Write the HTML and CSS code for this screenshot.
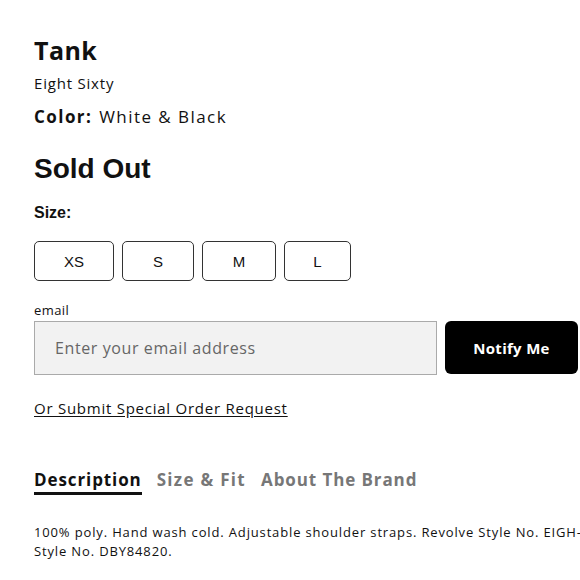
FILE: index.html
```html
<!DOCTYPE html>
<html lang="en">
<head>
<meta charset="utf-8">
<title>Tank - Eight Sixty</title>
<link rel="stylesheet" href="styles.css">
</head>
<body>
<main class="product">
  <h1 class="title">Tank</h1>
  <div class="brand">Eight Sixty</div>
  <div class="color"><span class="color-label">Color:</span> White &amp; Black</div>
  <div class="status">Sold Out</div>
  <div class="size-label">Size:</div>
  <div class="sizes">
    <button class="size size-xs">XS</button>
    <button class="size size-s">S</button>
    <button class="size size-m">M</button>
    <button class="size size-l">L</button>
  </div>
  <label class="email-label" for="email">email</label>
  <div class="notify">
    <input id="email" class="email-input" type="email" placeholder="Enter your email address">
    <button class="notify-btn">Notify Me</button>
  </div>
  <a class="special" href="#">Or Submit Special Order Request</a>
  <nav class="tabs">
    <span class="tab active">Description</span>
    <span class="tab">Size &amp; Fit</span>
    <span class="tab">About The Brand</span>
  </nav>
  <p class="desc">100% poly. Hand wash cold. Adjustable shoulder straps. Revolve Style No. EIGH-WS12 Manufacturer Style No. DBY84820.</p>
</main>
</body>
</html>
```
FILE: styles.css
```css
html, body {
  margin: 0;
  padding: 0;
  overflow: hidden;
  background: #fff;
}
body {
  font-family: "Open Sans", "Liberation Sans", sans-serif;
  color: #111;
}
.product {
  width: 544px;
  padding: 33px 0 0 34px;
  display: flex;
  flex-direction: column;
  align-items: flex-start;
}
.title {
  margin: 0;
  font-size: 25px;
  font-weight: 700;
  line-height: 34px;
  letter-spacing: 0.4px;
}
.brand {
  font-size: 15px;
  line-height: 20px;
  margin-top: 6px;
  letter-spacing: 0.8px;
}
.color {
  margin-top: 13px;
  font-size: 17px;
  line-height: 22px;
  letter-spacing: 1.45px;
}
.color-label {
  font-weight: 700;
  margin-right: 1px;
}
.status {
  margin-top: 25px;
  font-family: "Liberation Sans", Arial, sans-serif;
  font-size: 28px;
  font-weight: 700;
  line-height: 32px;
}
.size-label {
  margin-top: 18px;
  font-family: "Liberation Sans", Arial, sans-serif;
  font-size: 16px;
  font-weight: 700;
  line-height: 20px;
}
.sizes {
  display: flex;
  gap: 8px;
  margin-top: 18px;
}
.size {
  height: 40px;
  background: #fff;
  border: 1px solid #333;
  border-radius: 5px;
  font-family: "Liberation Sans", Arial, sans-serif;
  font-size: 15px;
  color: #111;
  padding: 0;
}
.size-xs { width: 80px; }
.size-s { width: 72px; }
.size-m { width: 74px; }
.size-l { width: 67px; }
.email-label {
  margin-top: 20px;
  font-size: 13px;
  line-height: 18px;
  letter-spacing: 0.4px;
}
.notify {
  display: flex;
  gap: 8px;
  margin-top: 2px;
  width: 544px;
}
.email-input {
  width: 403px;
  height: 54px;
  box-sizing: border-box;
  background: #f2f2f2;
  border: 1px solid #aaa;
  padding: 0 20px;
  font-family: inherit;
  font-size: 16px;
  color: #111;
  letter-spacing: 0.6px;
}
.email-input::placeholder {
  color: #666;
}
.notify-btn {
  width: 133px;
  height: 53px;
  background: #000;
  color: #fff;
  border: 0;
  border-radius: 6px;
  font-family: inherit;
  font-size: 15px;
  font-weight: 700;
  letter-spacing: 0.3px;
}
.special {
  margin-top: 23px;
  font-size: 15px;
  line-height: 20px;
  color: #111;
  text-decoration: underline;
  text-underline-offset: 2px;
  letter-spacing: 0.75px;
}
.tabs {
  display: flex;
  gap: 15px;
  margin-top: 50px;
}
.tab {
  font-size: 17px;
  font-weight: 700;
  line-height: 24px;
  color: #777;
  letter-spacing: 0.9px;
  border-bottom: 3px solid transparent;
}
.tab:nth-child(2) {
  letter-spacing: 1.3px;
}
.tab.active {
  color: #111;
  border-bottom-color: #111;
}
.desc {
  width: 705px;
  margin: 28px 0 0;
  font-size: 13px;
  line-height: 19px;
  letter-spacing: 0.85px;
}
```
